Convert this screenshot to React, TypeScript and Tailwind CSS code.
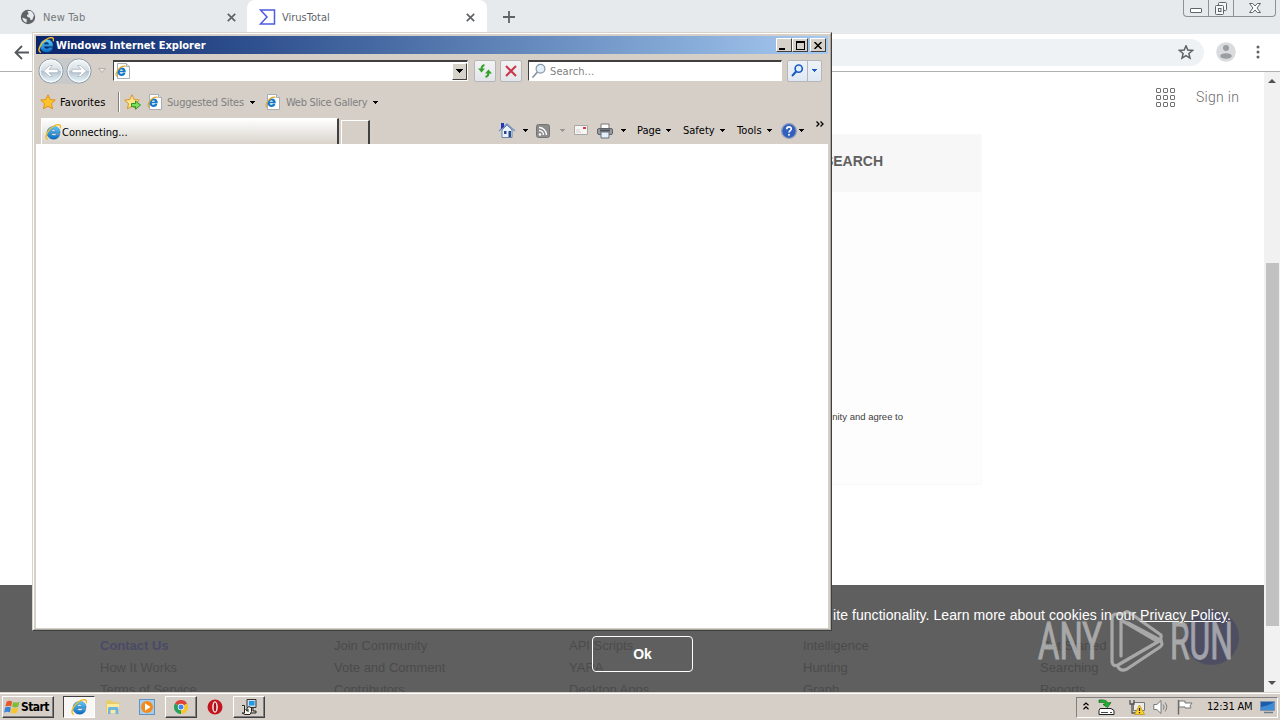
import type { ReactNode } from "react";

// Small down arrow used by all the classic toolbar menus
function Caret({ className = "text-black" }: { className?: string }) {
  return (
    <svg width="5" height="3" viewBox="0 0 5 3" className={`shrink-0 ${className}`} shapeRendering="crispEdges">
      <path d="M0 0h5v1H4v1H3v1H2V2H1V1H0z" fill="currentColor" />
    </svg>
  );
}

function IeLogo({ size = 16 }: { size?: number }) {
  return (
    <svg width={size} height={size} viewBox="0 0 16 16" className="shrink-0">
      <defs>
        <linearGradient id="ieBlue" x1="0" y1="0" x2="0" y2="1">
          <stop offset="0" stopColor="#5cccf8" />
          <stop offset="1" stopColor="#0c6cc4" />
        </linearGradient>
      </defs>
      <path
        d="M14.800 10.400h-3.800c-.4.8-1.200 1.200-2.200 1.200-1.400 0-2.400-.8-2.500-2.200h8.700c.5-4-2-7-6-7C4.700 2.400 2 5.100 2 8.800s2.700 6.400 6.600 6.400c3.100 0 5.500-1.600 6.200-4.800zM6.200 7.200c.2-1.200 1.100-1.900 2.300-1.900s2.100.7 2.200 1.900z"
        fill="url(#ieBlue)"
        stroke="#0b4f93"
        strokeWidth=".4"
      />
      <path
        d="M2.900 15.400C.6 14.900.3 12.300 2.400 8.600 4.900 4.100 10.400.1 13.900.7c1.700.3 1.900 1.800 1.300 3.600"
        fill="none"
        stroke="#f2ba24"
        strokeWidth="1.400"
      />
    </svg>
  );
}

function IePage() {
  return (
    <svg width="15" height="16" viewBox="0 0 15 16" className="shrink-0">
      <path d="M2.500.5h9l3 3v12h-12z" fill="#fff" stroke="#a9adb5" />
      <path d="M11.500.5v3h3" fill="#dde5ee" stroke="#a9adb5" />
      <path
        d="M10.400 9.800H8c-.3.6-.8.9-1.500.9-.9 0-1.600-.5-1.700-1.500h5.900c.3-2.700-1.300-4.600-3.900-4.600-2.500 0-4.400 1.700-4.400 4.200s1.800 4.200 4.300 4.200c2 0 3.300-1.100 3.700-3.200zM4.900 7.700c.1-.8.700-1.200 1.500-1.200s1.400.4 1.500 1.200z"
        fill="#1679c8"
      />
      <path d="M2.300 13.300C.4 12.700.700 10.600 2.300 8c1.900-3 5.400-5.300 8.300-4.700" fill="none" stroke="#e0a92a" strokeWidth="1.200" />
    </svg>
  );
}

function GoldStar({ add = false }: { add?: boolean }) {
  return (
    <svg width="17" height="16" viewBox="0 0 17 16" className="shrink-0">
      <path
        d="M8 .8l2.200 4.700 5.100.600-3.800 3.500 1 5.200L8 12.200l-4.500 2.600 1-5.200L.7 6.100l5.100-.6z"
        fill={add ? "#ffe48a" : "#fcc12c"}
        stroke="#d98b16"
        strokeWidth=".9"
        strokeLinejoin="round"
      />
      {add && <path d="M7.500 9.500h4V7l5 4-5 4.200v-2.500h-4z" fill="#7be05c" stroke="#1f8a1f" strokeWidth=".9" />}
    </svg>
  );
}

function NavButton({ flip = false }: { flip?: boolean }) {
  return (
    <svg width="26" height="26" viewBox="0 0 26 26" className="shrink-0">
      <defs>
        <linearGradient id="navBall" x1="0" y1="0" x2="0" y2="1">
          <stop offset="0" stopColor="#f6f8f9" />
          <stop offset=".48" stopColor="#d6dde3" />
          <stop offset=".5" stopColor="#b3c1cd" />
          <stop offset="1" stopColor="#eaf8fe" />
        </linearGradient>
      </defs>
      <circle cx="13" cy="13" r="12" fill="url(#navBall)" stroke="#8896a2" strokeWidth="1" />
      <circle cx="13" cy="13" r="10.900" fill="none" stroke="#f6f9fb" strokeWidth="1.100" />
      <g transform={flip ? "matrix(-1 0 0 1 26 0)" : undefined}>
        <path d="M5.500 13l6.200-5.500h2.600L11 11.300h9v3.400h-9l3.300 3.800h-2.600z" fill="#fff" stroke="#a3b0bc" strokeWidth=".7" />
      </g>
    </svg>
  );
}

function ToolButton({ children }: { children: ReactNode }) {
  return (
    <div className="flex h-[22px] w-[22px] items-center justify-center rounded-[2px] border border-[#b4b6b9] bg-gradient-to-b from-[#f3f3f3] to-[#e3e6e9]">
      {children}
    </div>
  );
}

function CaptionButton({ children }: { children: ReactNode }) {
  return (
    <div className="flex h-[14px] w-4 items-center justify-center border border-t-white border-r-[#404040] border-b-[#404040] border-l-white bg-[#d6d2ca]">
      {children}
    </div>
  );
}

function Magnifier({ color, width, size = 16 }: { color: string; width: number; size?: number }) {
  return (
    <svg width={size} height={size} viewBox="0 0 16 16" className="shrink-0">
      <circle cx="9.500" cy="5.700" r="4.400" fill="#e2f0fb" stroke={color} strokeWidth={width} />
      <path d="M6 9.500L2 14" stroke={color} strokeWidth={width + 0.6} strokeLinecap="round" />
    </svg>
  );
}

function TabClose() {
  return (
    <svg width="9" height="9" viewBox="0 0 9 9">
      <path d="M.8.800l7.400 7.400M8.200.8L.8 8.200" stroke="#5f6368" strokeWidth="1.700" />
    </svg>
  );
}

function ChromeWindow() {
  return (
    <div className="flex h-[692px] flex-col bg-white font-['Liberation_Sans',sans-serif]">
      {/* Tab strip */}
      <div className="flex h-[34px] shrink-0 justify-between bg-[#e6eaed]">
        <div className="flex">
          <div className="flex h-full w-[247px] items-center pl-5">
            <svg width="16" height="16" viewBox="0 0 16 16">
              <circle cx="8" cy="8" r="7.200" fill="#5f6368" />
              <path d="M2.300 8.600l4.500 1.600-.3 3.600C4 13 2.600 11 2.300 8.600zM7.500 2.100l3-.1c2 .9 3.200 2.600 3.400 4.700l-1.700 4.200-1.900-.2-.4-2-2.300-.7-.8-2 1.900-.8z" fill="#e6eaed" />
            </svg>
            <span className="mt-px ml-[7px] w-[184px] pt-px font-['DejaVu_Sans_Condensed','DejaVu_Sans',sans-serif] text-[11px] tracking-[0.15px] text-[#74777b]">New Tab</span>
            <TabClose />
          </div>
          <div className="flex h-full w-[240px] items-center rounded-t-[8px] bg-white pl-3">
            <svg width="17" height="16" viewBox="0 0 17 16">
              <path d="M1.500 1h14v14h-14L8 8z" fill="#fff" stroke="#4d5be0" strokeWidth="1.500" />
            </svg>
            <span className="mt-px ml-[6px] w-[184px] pt-px font-['DejaVu_Sans_Condensed','DejaVu_Sans',sans-serif] text-[11px] text-[#606367]">VirusTotal</span>
            <TabClose />
          </div>
          <svg width="12" height="12" viewBox="0 0 12 12" className="mt-[11px] ml-4">
            <path d="M6 0v12M0 6h12" stroke="#5f6368" strokeWidth="1.800" />
          </svg>
        </div>
        <div className="mr-1 flex h-[17px] w-[93px] rounded-b-[4px] border border-t-0 border-[#8c9298] text-[#5c646c]">
          <div className="flex w-[25px] items-end justify-center border-r border-[#8c9298] pb-[3px]">
            <div className="h-[5px] w-3 rounded-[1px] border border-[#5c646c] bg-white" />
          </div>
          <div className="flex w-[25px] items-center justify-center border-r border-[#8c9298]">
            <svg width="14" height="14" viewBox="0 0 14 14" fill="#f5f7f8" stroke="currentColor">
              <rect x="4.500" y="1.500" width="8" height="8" rx="1" />
              <rect x="1.500" y="4.500" width="8" height="9" rx="1" />
              <rect x="4.500" y="7.500" width="2.500" height="3" />
            </svg>
          </div>
          <div className="flex flex-1 items-center justify-center">
            <svg width="12" height="10" viewBox="0 0 12 10">
              <path d="M.5.5h3.200L6 3l2.300-2.500h3.200L8 5l3.500 4.500H8.300L6 7 3.700 9.500H.5L4 5z" fill="#fff" stroke="currentColor" strokeWidth="1" />
            </svg>
          </div>
        </div>
      </div>

      {/* Address toolbar */}
      <div className="flex h-[38px] shrink-0 items-center border-b border-[#aeb1ae] bg-white pl-[14px]">
        <svg width="16" height="16" viewBox="0 0 16 16" fill="none" stroke="#55595e" strokeWidth="1.800">
          <path d="M15 7.500H2M8 1L1.500 7.500 8 14" />
        </svg>
        <div className="ml-20 flex h-[27px] w-[1094px] items-center justify-end rounded-full bg-[#eff2f5] pr-[10px]">
          <svg width="16" height="16" viewBox="0 0 16 16" fill="none" stroke="#5f6368" strokeWidth="1.500">
            <path d="M8 .8l1.800 4.300 4.700.4-3.600 3 1.100 4.600L8 10.600l-4 2.500 1.100-4.600-3.600-3 4.700-.4z" />
          </svg>
        </div>
        <svg width="20" height="20" viewBox="0 0 20 20" className="mb-px ml-3">
          <circle cx="10" cy="10" r="9.800" fill="#dadbdc" />
          <circle cx="10" cy="6" r="3" fill="#9b9da0" />
          <ellipse cx="10" cy="14" rx="5.800" ry="2.800" fill="#9b9da0" />
        </svg>
        <svg width="4" height="14" viewBox="0 0 4 14" fill="#5f6368" className="mb-px ml-[20px]">
          <circle cx="2" cy="2" r="1.500" />
          <circle cx="2" cy="7" r="1.500" />
          <circle cx="2" cy="12" r="1.500" />
        </svg>
      </div>

      <div className="flex min-h-0 flex-1">
        <VirusTotalPage />
        <div className="flex w-4 shrink-0 flex-col items-center bg-[#f1f1f1] pt-[7px] pb-[7px]">
          <svg width="8" height="4" viewBox="0 0 8 4">
            <path d="M4 0l4 4H0z" fill="#505050" />
          </svg>
          <div className="mt-[180px] h-[363px] w-[13px] bg-[#c1c1c1]" />
          <svg width="8" height="4" viewBox="0 0 8 4" className="mt-auto">
            <path d="M4 4l4-4H0z" fill="#505050" />
          </svg>
        </div>
      </div>
    </div>
  );
}

const footerColumns = [
  { width: "w-[234px]", links: ["Contact Us", "How It Works", "Terms of Service"] },
  { width: "w-[235px]", links: ["Join Community", "Vote and Comment", "Contributors"] },
  { width: "w-[234px]", links: ["API Scripts", "YARA", "Desktop Apps"] },
  { width: "w-[237px]", links: ["Intelligence", "Hunting", "Graph"] },
  { width: "w-[120px]", links: ["Get Started", "Searching", "Reports"] },
];

function VirusTotalPage() {
  return (
    <div className="relative flex min-w-0 flex-1 flex-col overflow-hidden bg-white">
      <div className="flex h-[50px] shrink-0 items-center justify-end pr-[25px]">
        <div className="grid grid-cols-3 gap-[2px]">
          {Array.from({ length: 9 }, (_, i) => (
            <span key={i} className="h-[5px] w-[5px] rounded-[1px] border border-[#707070]" />
          ))}
        </div>
        <span className="ml-[21px] w-[43px] font-['Roboto',sans-serif] text-[14px] font-light tracking-[0.3px] whitespace-nowrap text-[#6a6a6a]">Sign in</span>
      </div>
      <div className="mx-auto mt-3 flex h-[351px] w-[700px] shrink-0 flex-col border border-[#f9f9f9] bg-[#fdfdfd]">
        <div className="flex h-[57px] items-center justify-end bg-[#f7f7f7] pr-[98px] pb-[5px] text-[14px] font-bold text-[#606060]">SEARCH</div>
        <p className="mt-[218px] pr-[78px] text-right text-[9.5px] text-[#404040]">nity and agree to</p>
      </div>
      <div className="relative mt-auto h-[107px] shrink-0 overflow-hidden bg-[#5f5f5f]">
        <div className="flex pt-[50px] pl-[100px] text-[13px] leading-[22px] text-[#4b4b4b]">
          {footerColumns.map((col) => (
            <ul key={col.links[0]} className={`shrink-0 ${col.width}`}>
              {col.links.map((link) => (
                <li key={link} className={link === "Contact Us" ? "font-bold text-[#4a4a66]" : ""}>
                  {link}
                </li>
              ))}
            </ul>
          ))}
        </div>
        <div className="absolute top-[25px] left-[1184px] h-[55px] w-[55px] rounded-full bg-[#4c4c64]/90" />
        {/* Cookie consent */}
        <div className="absolute inset-0 text-white">
          <p className="mt-[21px] mr-[33px] text-right text-[14px] leading-[18px] tracking-[0.06px] whitespace-nowrap">
            ite functionality. Learn more about cookies in our <span className="underline">Privacy Policy</span>.
          </p>
          <button className="mt-3 ml-[592px] flex h-9 w-[101px] items-center justify-center rounded-[4px] border border-white text-[14px] font-bold">Ok</button>
        </div>
      </div>
    </div>
  );
}

function IeWindow() {
  return (
    <div className="absolute top-8 left-8 flex h-[599px] w-[800px] flex-col border border-t-[#d6d2ca] border-r-[#404040] border-b-[#404040] border-l-[#d6d2ca] bg-[#d6cfc8] font-['DejaVu_Sans_Condensed','DejaVu_Sans',sans-serif] text-[11px] text-black">
      <div className="flex min-h-0 flex-1 flex-col border border-t-white border-r-[#a9a6a0] border-b-[#a9a6a0] border-l-white p-[2px] pb-px">
        {/* Title bar */}
        <div className="flex h-[18px] shrink-0 items-center bg-gradient-to-r from-[#0a246a] to-[#a6caf0] pr-[2px] pl-[2px]">
          <IeLogo />
          <span className="ml-[2px] flex-1 pt-[2px] text-[11px] font-bold text-white">Windows Internet Explorer</span>
          <CaptionButton>
            <span className="mt-[7px] mr-1 h-[2px] w-[6px] bg-black" />
          </CaptionButton>
          <CaptionButton>
            <span className="h-[9px] w-[9px] border border-t-2 border-black" />
          </CaptionButton>
          <span className="w-[2px]" />
          <CaptionButton>
            <svg width="8" height="7" viewBox="0 0 8 7">
              <path d="M.5 0l7 7M7.500 0l-7 7" stroke="#000" strokeWidth="1.500" />
            </svg>
          </CaptionButton>
        </div>

        {/* Navigation row */}
        <div className="flex h-[33px] shrink-0 items-center pl-[2px]">
          <div className="flex gap-[2px] rounded-full bg-[#c8c9ca]">
            <NavButton />
            <NavButton flip />
          </div>
          <svg width="8" height="5" viewBox="0 0 8 5" className="ml-[6px]">
            <path d="M.5.500h7L4 4.500z" fill="#e8e4df" stroke="#aaa6a0" strokeWidth=".8" />
          </svg>
          <div className="ml-[7px] flex h-[21px] w-[355px] items-center justify-between border border-t-2 border-t-[#404040] border-r-white border-b-white border-l-[#404040] bg-white pl-[1px]">
            <IePage />
            <div className="flex h-[17px] w-[15px] items-center justify-center border border-t-white border-r-[#404040] border-b-[#404040] border-l-white bg-[#d6d2ca]">
              <svg width="7" height="4" viewBox="0 0 7 4" shapeRendering="crispEdges">
                <path d="M0 0h7v1H6v1H5v1H4v1H3V3H2V2H1V1H0z" />
              </svg>
            </div>
          </div>
          <div className="ml-[6px] flex gap-1">
            <ToolButton>
              <svg width="16" height="16" viewBox="0 0 16 16" fill="none" stroke="#35a02e" strokeWidth="2">
                <path d="M7.500 2C5 2.500 4.500 4 4.500 6.500M8.500 14c2.500-.5 3-2 3-4.500" />
                <path d="M1 5.500h7L4.500 9.500zM8 10.500h7l-3.500-4z" fill="#35a02e" stroke="none" />
              </svg>
            </ToolButton>
            <ToolButton>
              <svg width="12" height="12" viewBox="0 0 12 12">
                <path d="M1 1l10 10M11 1L1 11" stroke="#c9374b" strokeWidth="2" />
              </svg>
            </ToolButton>
          </div>
          <div className="ml-[6px] flex h-[21px] w-[254px] items-center border border-t-2 border-t-[#404040] border-r-white border-b-white border-l-[#404040] bg-white pl-[2px]">
            <Magnifier color="#8995a3" width={1.2} />
            <span className="ml-[3px] pt-[3px] tracking-[0.1px] text-[#808080]">Search...</span>
          </div>
          <div className="ml-[5px] flex h-[22px] w-[35px] rounded-[2px] border border-[#b4b6b9] bg-gradient-to-b from-[#eef2f7] to-[#dfe8f2]">
            <div className="flex w-5 items-center justify-center border-r border-[#b4b6b9]">
              <Magnifier color="#1959c4" width={2} size={13} />
            </div>
            <div className="flex flex-1 items-center justify-center">
              <Caret className="text-[#1959c4]" />
            </div>
          </div>
        </div>

        {/* Favorites bar */}
        <div className="flex h-[30px] shrink-0 items-center pl-1">
          <GoldStar />
          <span className="ml-[3px] w-[58px] pt-[2px] tracking-[0.1px]">Favorites</span>
          <span className="h-5 border-l border-[#808080]" />
          <span className="h-5 border-l border-white" />
          <span className="ml-1">
            <GoldStar add />
          </span>
          <span className="ml-[6px]">
            <IePage />
          </span>
          <span className="ml-[5px] w-[83px] pt-[3px] tracking-[-0.2px] whitespace-nowrap text-[#808080]">Suggested Sites</span>
          <Caret />
          <span className="ml-[10px]">
            <IePage />
          </span>
          <span className="ml-[6px] w-[87px] pt-[3px] tracking-[-0.3px] whitespace-nowrap text-[#808080]">Web Slice Gallery</span>
          <Caret />
        </div>

        {/* Tabs and command bar */}
        <div className="flex h-[27px] shrink-0 items-end pl-[5px]">
          <div className="flex h-[26px] w-[298px] items-center border-t border-r-2 border-l border-t-white border-r-[#404040] border-l-white bg-gradient-to-b from-white to-[#d8d3cb] pl-[3px]">
            <IeLogo />
            <span className="ml-[1px] pt-[3px]">Connecting...</span>
          </div>
          <div className="ml-[2px] h-6 w-[29px] border-t border-r-2 border-l border-t-white border-r-[#404040] border-l-white" />
          <div className="ml-[128px] flex h-[27px] flex-1 items-center">
            <svg width="18" height="17" viewBox="0 0 18 17">
              <path d="M4 8v7.500h10V8L9 3z" fill="#eaf1fb" stroke="#6b83ad" />
              <path d="M1 9l8-7 8 7" fill="none" stroke="#7b95c0" strokeWidth="1.500" />
              <path d="M3 1h3v4L3 7z" fill="#2438b8" />
              <path d="M6 9h2.500v3H6zM10.500 9h2.500v6h-2.500z" fill="#274b8e" />
            </svg>
            <span className="ml-[7px]"><Caret /></span>
            <svg width="14" height="14" viewBox="0 0 14 14" className="ml-2">
              <rect x=".5" y=".5" width="13" height="13" rx="2" fill="#8c8c8c" stroke="#747474" />
              <circle cx="4" cy="10.500" r="1.300" fill="#fff" />
              <path d="M3 6.500A4.500 4.500 0 017.500 11M3 3.500A7.500 7.500 0 0110.500 11" fill="none" stroke="#fff" strokeWidth="1.300" />
            </svg>
            <span className="ml-[10px]"><Caret className="text-[#9a9690]" /></span>
            <svg width="14" height="11" viewBox="0 0 14 11" className="ml-[9px]">
              <path d="M.5.500h13v9H.5z" fill="#f7f6f5" stroke="#aaa6a2" />
              <path d="M9 2h3v2H9z" fill="#d23b45" />
              <path d="M2 5h4M2 7h5" stroke="#d4d1cf" />
            </svg>
            <svg width="16" height="16" viewBox="0 0 16 16" className="ml-[9px]">
              <path d="M4 1h8v6H4z" fill="#fff" stroke="#777" />
              <rect x=".5" y="5.500" width="15" height="6" rx="1.500" fill="#999ba1" stroke="#5f6268" />
              <path d="M3 6.500h10v2H3z" fill="#4e5157" />
              <path d="M4 9h8v6H4z" fill="#e3f0f9" stroke="#66717a" />
            </svg>
            <span className="ml-[8px]"><Caret /></span>
            <span className="ml-[11px] w-[29px] pt-[2px]">Page</span>
            <Caret />
            <span className="ml-[12px] w-[37px] pt-[2px]">Safety</span>
            <Caret />
            <span className="ml-[12px] w-[30px] pt-[2px] tracking-[0.1px]">Tools</span>
            <Caret />
            <svg width="16" height="16" viewBox="0 0 16 16" className="ml-[9px]">
              <circle cx="8" cy="8" r="7.300" fill="#315fc0" stroke="#8b98b8" strokeWidth="1.300" />
              <path d="M5.700 6.200C5.700 3 10.500 3.200 10.300 6 10.200 7.600 8 7.600 8 9.500" fill="none" stroke="#fff" strokeWidth="1.600" />
              <circle cx="8" cy="11.800" r="1" fill="#fff" />
            </svg>
            <span className="ml-[2px]"><Caret /></span>
            <svg width="8" height="6" viewBox="0 0 8 6" className="mb-[14px] ml-[12px]" fill="none" stroke="#000" strokeWidth="1.300">
              <path d="M.5.500L3 3 .5 5.500M4.500.500L7 3 4.500 5.500" />
            </svg>
          </div>
        </div>
        <div className="flex-1 bg-white" />
      </div>
    </div>
  );
}

function TaskButton({ children }: { children: ReactNode }) {
  return (
    <div className="flex h-[22px] w-8 items-center justify-center border border-t-white border-r-[#404040] border-b-[#404040] border-l-white shadow-[inset_-1px_-1px_0_#808080]">
      {children}
    </div>
  );
}

function Taskbar() {
  return (
    <div className="flex h-7 items-center border-t border-[#d6d2ca] bg-[#d6cfc8] pl-[2px] font-['DejaVu_Sans_Condensed','DejaVu_Sans',sans-serif] text-[11px] shadow-[inset_0_1px_0_#fff]">
      <div className="mt-px flex h-[22px] w-[52px] shrink-0 items-center border border-t-white border-r-[#404040] border-b-[#404040] border-l-white pl-[1px] shadow-[inset_-1px_-1px_0_#808080]">
        <svg width="16" height="16" viewBox="0 1 15 14">
          <path d="M2.500 3C4 1.800 6 2 7.600 2.900L6.700 7.500C5 6.600 3.200 6.500 1.300 7.600z" fill="#e8562b" />
          <path d="M8.500 3.200c2 .9 4 .9 6-.2l-1.100 4.700c-2 1-3.800 1-5.800.1z" fill="#7dbb3a" />
          <path d="M1 8.600c1.900-1.200 3.700-1 5.500-.1l-1 4.700C3.800 12.300 2 12.200.1 13.300z" fill="#3b83d6" />
          <path d="M7.400 8.800c2 .9 3.900.8 5.900-.1l-1.200 4.600c-2 1-3.800 1-5.700.1z" fill="#f7c52b" />
        </svg>
        <span className="pl-px text-[12px] font-bold tracking-[-0.6px]">Start</span>
      </div>
      <div className="mt-px ml-[9px] flex h-[22px] w-8 items-center justify-center border border-t-[#404040] border-r-white border-b-white border-l-[#404040] bg-[#f8f7f5]">
        <IeLogo />
      </div>
      <div className="mt-px flex items-center">
        <svg width="16" height="16" viewBox="0 0 16 16" className="ml-[10px]">
          <path d="M1 3V1.500h6L8 3h6v11H1z" fill="#e7cc69" />
          <path d="M2 5h12v9H2z" fill="#faeb9f" />
          <path d="M3 15V9.500C3 8 4 8 5 8h6.500c1.500 0 2 .5 2 2v5h-3v-4h-5v4z" fill="#6fb5dd" />
        </svg>
        <svg width="16" height="16" viewBox="0 0 16 16" className="ml-[18px]">
          <rect x=".5" y=".5" width="15" height="15" fill="#a8cdec" stroke="#5c94c4" />
          <circle cx="8" cy="8" r="6" fill="#f58a1c" />
          <path d="M6 4.300L11.500 8 6 11.700z" fill="#fff" />
        </svg>
        <div className="ml-[10px]">
          <TaskButton>
            <svg width="14" height="14" viewBox="0 0 14 14">
              <path d="M7 7L.9 3.500A7 7 0 0113.100 3.500z" fill="#dc4437" />
              <path d="M7 7l6.100-3.500A7 7 0 017 14z" fill="#f5c72c" />
              <path d="M7 7v7A7 7 0 01.9 3.500z" fill="#28a25b" />
              <circle cx="7" cy="7" r="3.200" fill="#fff" />
              <circle cx="7" cy="7" r="2.500" fill="#4285e8" />
            </svg>
          </TaskButton>
        </div>
        <svg width="16" height="16" viewBox="0 0 16 16" className="ml-[10px]">
          <circle cx="8" cy="8" r="7.500" fill="#c4151f" />
          <ellipse cx="8" cy="8" rx="2.800" ry="5.700" fill="#f6eeee" />
          <ellipse cx="8" cy="8" rx="1.300" ry="4.600" fill="#a5101a" />
        </svg>
        <div className="ml-[10px]">
          <TaskButton>
            <svg width="16" height="16" viewBox="0 0 16 16">
              <path d="M6 .5h9v8H6z" fill="#d3dce6" stroke="#333" />
              <path d="M8 2h5.500v4.500H8z" fill="#1c9be8" />
              <path d="M12 9v3h3v2H9" fill="none" stroke="#222" />
              <path d="M1 6.500h2.500V14H1l3 1.500h5l1.500-3V9L8 7.500 6 9v3L4.500 10" fill="#f5f5e9" stroke="#222" />
              <path d="M7 10v3" stroke="#222" />
            </svg>
          </TaskButton>
        </div>
      </div>
      <div className="mt-px mr-[2px] ml-auto flex h-[21px] w-[202px] items-center border border-t-[#808080] border-r-white border-b-white border-l-[#808080]">
        <svg width="6" height="8" viewBox="0 0 6 8" className="mb-[2px] ml-[6px]" fill="none" stroke="#000" strokeWidth="1.200">
          <path d="M.5 3.300L3 1l2.500 2.300M.5 7.200L3 4.900l2.500 2.300" />
        </svg>
        <svg width="17" height="17" viewBox="0 0 17 17" className="ml-[9px]">
          <path d="M2 9.500h11l3 2v4H1v-4z" fill="#fff" stroke="#222" />
          <path d="M3 13.500h7M12 13.500h2" stroke="#444" />
          <path d="M1 1c5-.5 8 .5 9 3l3-.5-3.500 5L5 5.500l2.500-.7C6.500 3.500 4 3 1 3.500z" fill="#22b22e" stroke="#0b641a" strokeWidth=".7" />
        </svg>
        <svg width="16" height="16" viewBox="0 0 16 16" className="ml-[14px]">
          <path d="M4.500 3.500h11v8h-11z" fill="#eeece8" stroke="#777" />
          <path d="M1 1v4h4V1M3 5v9h4" fill="none" stroke="#555" strokeWidth="1.300" />
          <path d="M10.500 6l5 9.500h-10z" fill="#fbd22b" stroke="#b98b0a" strokeWidth=".7" />
          <path d="M10.500 9v3M10.500 13v1.200" stroke="#222" strokeWidth="1.200" />
        </svg>
        <svg width="16" height="16" viewBox="0 0 16 16" className="ml-[8px]">
          <path d="M.8 5.500h3L8 1.500v13l-4.200-4h-3z" fill="#fff" stroke="#777" />
          <path d="M10 5.500q2 2.500 0 5M12 3.500q3.500 4.500 0 9" fill="none" stroke="#888" strokeWidth="1.100" />
        </svg>
        <svg width="17" height="16" viewBox="0 0 17 16" className="ml-[8px]">
          <path d="M1.500 1v14.500" stroke="#666" strokeWidth="1.400" />
          <path d="M2 2h6v2h7l-2 3 1 2H8V8H2z" fill="#fff" stroke="#777" />
        </svg>
        <span className="ml-[13px] w-[53px] pt-px tracking-[-0.2px] whitespace-nowrap">12:31 AM</span>
        <svg width="16" height="14" viewBox="0 0 16 14">
          <path d="M.5 1.500h14v9H.5z" fill="#1b5cab" stroke="#7e93ac" />
          <path d="M1 7c5-1 9-2 13-5v8H1z" fill="#3f8bd4" />
          <path d="M4 12.500h9" stroke="#6c7d90" strokeWidth="1.500" />
        </svg>
      </div>
    </div>
  );
}

// Translucent logo laid over the bottom right corner
function Watermark() {
  return (
    <svg width="200" height="70" viewBox="0 0 200 70" className="absolute top-[606px] left-[1035px] opacity-60" fill="none">
      <g fill="#dadada" stroke="#dadada" strokeWidth="1" fontFamily="Roboto, sans-serif" fontSize="51">
        <text x="3" y="53" textLength="64" lengthAdjust="spacingAndGlyphs">ANY</text>
        <text x="135" y="53" textLength="63" lengthAdjust="spacingAndGlyphs">RUN</text>
      </g>
      <g stroke="#dadada" strokeWidth="3.200" strokeLinejoin="round" strokeLinecap="round">
        <path d="M86 50V14l36 21q5-1 4-6L95 7q-4-3-7 1h-8q-3 1-3 5v43q1 5 6 3l43-25" />
        <path d="M83 61q3 5 9 2l33-22q4-3 0-7L93 17" />
      </g>
    </svg>
  );
}

export default function App() {
  return (
    <div className="relative h-[720px] w-[1280px] overflow-hidden">
      <ChromeWindow />
      <Taskbar />
      <IeWindow />
      <Watermark />
    </div>
  );
}
